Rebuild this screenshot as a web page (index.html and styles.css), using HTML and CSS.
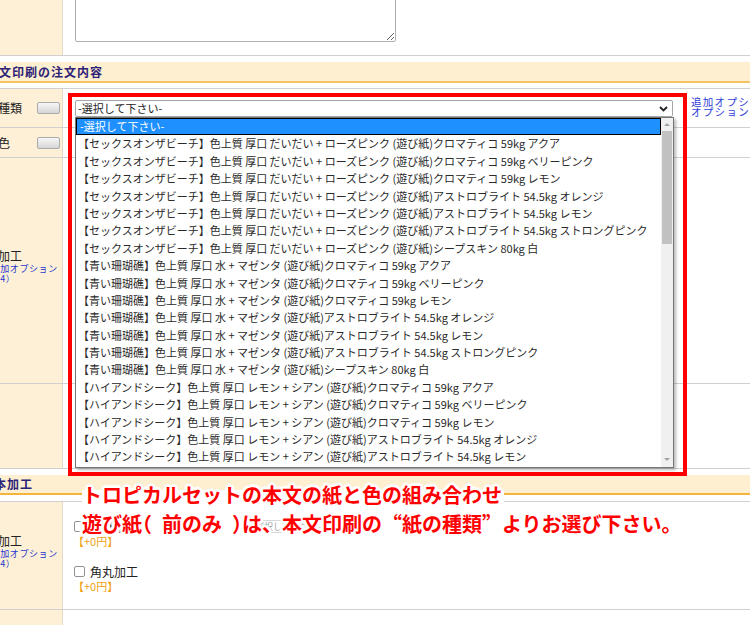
FILE: index.html
```html
<!DOCTYPE html>
<html lang="ja">
<head>
<meta charset="utf-8">
<title>本文印刷の注文内容</title>
<link rel="stylesheet" href="styles.css">
</head>
<body>
<div class="page">
  <div class="tbl tbl-first">
    <div class="row h-top">
      <div class="lbl"></div>
      <div class="cnt cnt-top"><textarea class="memo"></textarea></div>
      <div class="ext"></div>
    </div>
  </div>

  <div class="sec"><span class="sec-t">本文印刷の注文内容</span></div>

  <div class="tbl">
    <div class="row h-kind">
      <div class="lbl"><span class="ltxt">紙の種類</span><span class="mini"></span></div>
      <div class="cnt cnt-kind">
        <div class="sel-box"><span>-選択して下さい-</span>
          <svg class="chev" width="9" height="6" viewBox="0 0 9 6"><path d="M1 1 L4.5 4.5 L8 1" fill="none" stroke="#222" stroke-width="1.8"/></svg>
        </div>
      </div>
      <div class="ext ext-links"><a class="lnk">追加オプションについて</a><a class="lnk">オプション料金表</a></div>
    </div>
    <div class="row h-color">
      <div class="lbl"><span class="ltxt">紙の色</span><span class="mini"></span></div>
      <div class="cnt"></div>
      <div class="ext"></div>
    </div>
    <div class="row h-proc">
      <div class="lbl lbl-stack"><div class="stack"><div class="ltxt">表面加工</div><div class="lnote">（追加オプション<br>（※4）</div></div></div>
      <div class="cnt"></div>
      <div class="ext"></div>
    </div>
    <div class="row h-empty">
      <div class="lbl"></div>
      <div class="cnt"></div>
      <div class="ext"></div>
    </div>
  </div>

  <div class="sec sec-b"><span class="sec-t sec-t2">製本加工</span></div>

  <div class="tbl">
    <div class="row h-c1">
      <div class="lbl lbl-stack"><div class="stack"><div class="ltxt">表面加工</div><div class="lnote">（追加オプション<br>（※4）</div></div></div>
      <div class="cnt cnt-opts">
        <div class="opt">
          <div class="opt-line"><span class="cb"></span><span class="opt-name opt-wide">遊び紙</span><span class="dis-sel">-選択して下さい-</span></div>
          <div class="price">【+0円】</div>
        </div>
        <div class="opt opt-2">
          <div class="opt-line"><span class="cb"></span><span class="opt-name">角丸加工</span></div>
          <div class="price">【+0円】</div>
        </div>
      </div>
      <div class="ext"></div>
    </div>
    <div class="row h-c2">
      <div class="lbl"></div>
      <div class="cnt"></div>
      <div class="ext"></div>
    </div>
  </div>
</div>

<div class="redbox"></div>

<div class="dd">
  <div class="dd-list">
    <div class="dd-item dd-sel">-選択して下さい-</div>
    <div class="dd-item">【セックスオンザビーチ】色上質 厚口 だいだい + ローズピンク (遊び紙)クロマティコ 59kg アクア</div>
    <div class="dd-item">【セックスオンザビーチ】色上質 厚口 だいだい + ローズピンク (遊び紙)クロマティコ 59kg ベリーピンク</div>
    <div class="dd-item">【セックスオンザビーチ】色上質 厚口 だいだい + ローズピンク (遊び紙)クロマティコ 59kg レモン</div>
    <div class="dd-item">【セックスオンザビーチ】色上質 厚口 だいだい + ローズピンク (遊び紙)アストロブライト 54.5kg オレンジ</div>
    <div class="dd-item">【セックスオンザビーチ】色上質 厚口 だいだい + ローズピンク (遊び紙)アストロブライト 54.5kg レモン</div>
    <div class="dd-item">【セックスオンザビーチ】色上質 厚口 だいだい + ローズピンク (遊び紙)アストロブライト 54.5kg ストロングピンク</div>
    <div class="dd-item">【セックスオンザビーチ】色上質 厚口 だいだい + ローズピンク (遊び紙)シープスキン 80kg 白</div>
    <div class="dd-item">【青い珊瑚礁】色上質 厚口 水 + マゼンタ (遊び紙)クロマティコ 59kg アクア</div>
    <div class="dd-item">【青い珊瑚礁】色上質 厚口 水 + マゼンタ (遊び紙)クロマティコ 59kg ベリーピンク</div>
    <div class="dd-item">【青い珊瑚礁】色上質 厚口 水 + マゼンタ (遊び紙)クロマティコ 59kg レモン</div>
    <div class="dd-item">【青い珊瑚礁】色上質 厚口 水 + マゼンタ (遊び紙)アストロブライト 54.5kg オレンジ</div>
    <div class="dd-item">【青い珊瑚礁】色上質 厚口 水 + マゼンタ (遊び紙)アストロブライト 54.5kg レモン</div>
    <div class="dd-item">【青い珊瑚礁】色上質 厚口 水 + マゼンタ (遊び紙)アストロブライト 54.5kg ストロングピンク</div>
    <div class="dd-item">【青い珊瑚礁】色上質 厚口 水 + マゼンタ (遊び紙)シープスキン 80kg 白</div>
    <div class="dd-item">【ハイアンドシーク】色上質 厚口 レモン + シアン (遊び紙)クロマティコ 59kg アクア</div>
    <div class="dd-item">【ハイアンドシーク】色上質 厚口 レモン + シアン (遊び紙)クロマティコ 59kg ベリーピンク</div>
    <div class="dd-item">【ハイアンドシーク】色上質 厚口 レモン + シアン (遊び紙)クロマティコ 59kg レモン</div>
    <div class="dd-item">【ハイアンドシーク】色上質 厚口 レモン + シアン (遊び紙)アストロブライト 54.5kg オレンジ</div>
    <div class="dd-item">【ハイアンドシーク】色上質 厚口 レモン + シアン (遊び紙)アストロブライト 54.5kg レモン</div>
  </div>
  <div class="dd-bar"><span class="arr arr-up"></span><span class="thumb"></span><span class="arr arr-dn"></span></div>
</div>

<div class="anno"><span class="a1">トロピカルセットの本文の紙と色の組み合わせ</span><br><span class="a2">遊び紙<span class="pw pw-o">（</span>前のみ<span class="pw pw-c">）</span>は、本文印刷の“紙の種類”よりお選び下さい。</span></div>
</body>
</html>
```

FILE: styles.css
```css
* { box-sizing: border-box; }
html, body { margin: 0; padding: 0; }
body {
  width: 750px;
  height: 625px;
  overflow: hidden;
  position: relative;
  background: #fff;
  color: #222;
  font-family: "Noto Sans CJK JP", "Noto Sans", sans-serif;
  font-size: 12px;
}
.page { width: 778px; margin: -20px 0 0 -28px; }

.tbl { border-top: 1px solid #d0d0d0; }
.tbl-first { border-top: 0; }

.row {
  display: grid;
  grid-template-columns: 91px 625px 62px;
  border-bottom: 1px solid #d0d0d0;
}
.h-top { height: 76px; }
.h-kind { height: 39px; }
.h-color { height: 30px; }
.h-proc { height: 226px; }
.h-empty { height: 85px; }
.h-c1 { height: 108px; }
.h-c2 { height: 90px; }

.lbl {
  background: #fdf0d6;
  border-right: 1px solid #e4dac6;
  display: flex;
  align-items: center;
  justify-content: space-between;
  padding: 0 2px;
}
.ltxt { font-size: 12px; line-height: 14px; color: #222; white-space: nowrap; }
.mini {
  width: 23px;
  height: 12px;
  border: 1px solid #ababab;
  border-radius: 2px;
  background: linear-gradient(#f6f6f6, #d6d6d6);
}
.lbl-stack { padding-bottom: 8px; }
.lnote {
  margin: 1px 0 0 7px;
  font-size: 9px;
  line-height: 10px;
  letter-spacing: 0.6px;
  color: #1f35d0;
  white-space: nowrap;
}

.cnt-top { padding: 0 0 0 12px; }
.memo {
  display: block;
  width: 321px;
  height: 62px;
  border: 1px solid #b0b0b0;
  border-radius: 2px;
  margin: 0;
  background: #fff;
}

.sec {
  margin: 6px 0 5px;
  height: 21px;
  background: #fdefcf;
  border-bottom: 2px solid #f6c462;
}
.sec-b { margin: 6px 0 6px; height: 20px; border-bottom-color: #f5b43c; }
.sec-t {
  display: block;
  padding-left: 14px;
  font-size: 12px;
  font-weight: 700;
  line-height: 19px;
  letter-spacing: 1px;
  color: #2e2378;
  white-space: nowrap;
}
.sec-b .sec-t { line-height: 18px; }
.sec-t2 { padding-left: 9px; }

.cnt-kind { padding: 11px 0 0 12px; }
.sel-box {
  width: 598px;
  height: 17px;
  border: 1px solid #a6a6a6;
  border-radius: 2px;
  background: #fff;
  font-size: 11px;
  line-height: 15px;
  padding: 0 4px 0 2px;
  display: flex;
  align-items: center;
  justify-content: space-between;
  color: #222;
}
.chev { display: block; }

.ext-links {
  padding: 8px 0 0 3px;
  display: flex;
  flex-direction: column;
  overflow: hidden;
}
.lnk {
  font-size: 10.5px;
  line-height: 10px;
  letter-spacing: 1.3px;
  color: #3040d8;
  white-space: nowrap;
}

.cnt-opts { padding: 17px 0 0 11px; }
.opt-2 { margin-top: 15px; }
.opt-line { display: flex; align-items: center; height: 15px; }
.cb {
  width: 11px;
  height: 11px;
  border: 1px solid #929292;
  border-radius: 2px;
  background: #fff;
  margin-right: 5px;
}
.opt-name { font-size: 12px; line-height: 15px; color: #222; white-space: nowrap; }
.opt-wide { width: 158px; }
.dis-sel {
  width: 104px;
  height: 13px;
  border: 1px solid #d6d6d6;
  border-radius: 2px;
  font-size: 9px;
  line-height: 11px;
  color: #a0a0a0;
  padding-left: 3px;
  white-space: nowrap;
}
.price { font-size: 11px; line-height: 15px; color: #f0a010; white-space: nowrap; margin-left: -1px; }

.redbox {
  position: absolute;
  left: 68px;
  top: 93px;
  width: 619px;
  height: 383px;
  border: 4px solid #ff0000;
}

.dd {
  position: absolute;
  left: 75px;
  top: 117px;
  width: 599px;
  height: 351px;
  border: 1px solid #767676;
  background: #fff;
  box-shadow: 2px 2px 3px rgba(0, 0, 0, 0.28);
  display: flex;
  overflow: hidden;
}
.dd-list { flex: 1; overflow: hidden; font-size: 11px; color: #2a2a2a; }
.dd-item {
  height: 17.4px;
  line-height: 17.4px;
  padding-left: 2px;
  white-space: nowrap;
  overflow: hidden;
}
.dd-sel {
  background: #1e90ff;
  color: #fff;
  border: 1px solid #000;
  padding-left: 3px;
  line-height: 15.4px;
}
.dd-bar { width: 12px; background: #f0f0f0; position: relative; }
.thumb {
  position: absolute;
  left: 1px;
  right: 1px;
  top: 13px;
  height: 113px;
  background: #c1c1c1;
}
.arr {
  position: absolute;
  left: 3px;
  width: 0;
  height: 0;
  border-left: 3px solid transparent;
  border-right: 3px solid transparent;
}
.arr-up { top: 5px; border-bottom: 3px solid #a3a3a3; }
.arr-dn { bottom: 6px; border-top: 3px solid #a3a3a3; }

.anno {
  position: absolute;
  left: 82px;
  top: 480px;
  font-size: 20px;
  font-weight: 700;
  line-height: 29px;
  color: #ff0000;
  white-space: nowrap;
  text-shadow:
    2px 0 0 #fff, -2px 0 0 #fff, 0 2px 0 #fff, 0 -2px 0 #fff,
    2px 2px 0 #fff, -2px -2px 0 #fff, 2px -2px 0 #fff, -2px 2px 0 #fff,
    3px 0 1px #fff, -3px 0 1px #fff, 0 3px 1px #fff, 0 -3px 1px #fff;
}
.a1 { background: linear-gradient(transparent 10px, #fff 10px, #fff 25px, transparent 25px); padding-right: 2px; }
.a2 { font-feature-settings: "fwid" 1; }
.pw { display: inline-block; width: 20px; font-feature-settings: "halt" 1; }
.pw-o { text-align: left; }
.pw-c { text-align: right; }
```
